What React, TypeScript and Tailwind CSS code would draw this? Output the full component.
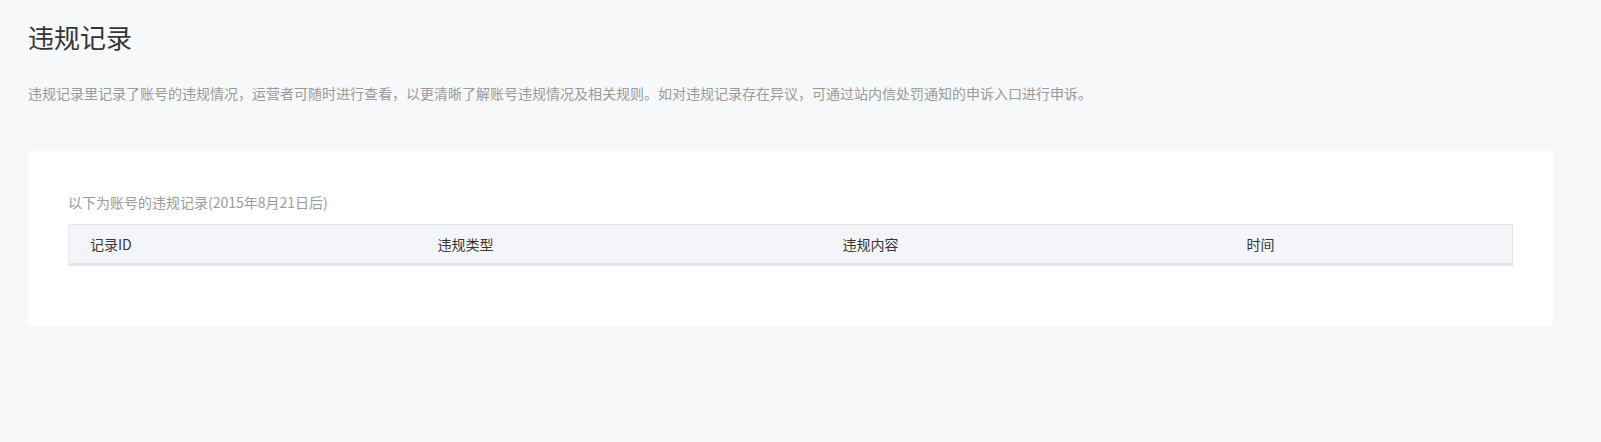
import React from 'react';

const columns = [
  { label: '记录ID', w: 'w-[348px]' },
  { label: '违规类型', w: 'w-[405px]' },
  { label: '违规内容', w: 'w-[404px]' },
  { label: '时间', w: '' },
];

export default function App() {
  return (
    <div className="min-h-[442px] bg-[#f7f8fa] pl-[28px] pr-[48px] pt-[20px] font-['Noto_Sans_CJK_SC',sans-serif]">
      <h1 className="text-[26px] leading-[34px] text-[#353535] font-normal">违规记录</h1>
      <p className="mt-[29px] text-[14px] leading-[20px] text-[#9a9a9a]">
        违规记录里记录了账号的违规情况，运营者可随时进行查看，以更清晰了解账号违规情况及相关规则。如对违规记录存在异议，可通过站内信处罚通知的申诉入口进行申诉。
      </p>

      <div className="mt-[48px] bg-white rounded-[3px] px-[40px] pt-[40px] pb-[60px]">
        <p className="text-[14px] leading-[22px] text-[#9a9a9a]">以下为账号的违规记录(2015年8月21日后)</p>
        <table className="mt-[11px] w-full border-collapse table-fixed">
          <thead>
            <tr className="bg-[#f4f5f9] border border-[#e4e4ea] border-b-[3px]">
              {columns.map((c) => (
                <th
                  key={c.label}
                  className={`${c.w} h-[40px] pl-[21px] text-left text-[14px] font-normal text-[#353535]`}
                >
                  {c.label}
                </th>
              ))}
            </tr>
          </thead>
        </table>
      </div>
    </div>
  );
}
